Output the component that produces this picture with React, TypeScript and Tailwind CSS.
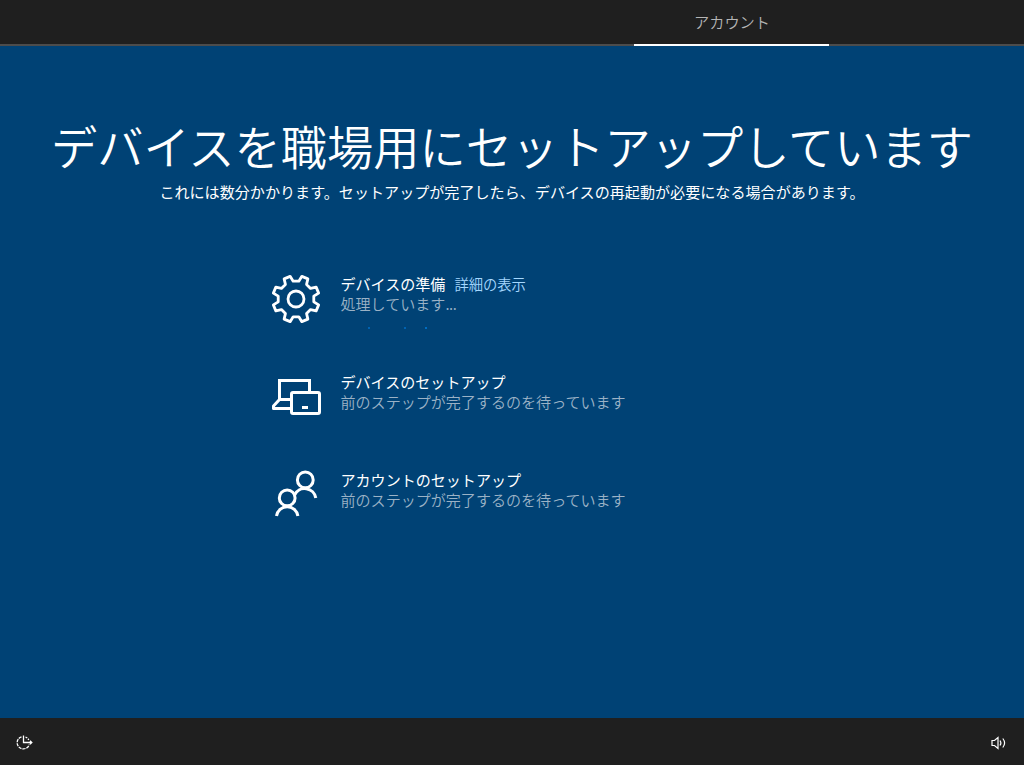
import type { ReactNode } from 'react';

const polar = (radius: number, degrees: number) => {
  const a = ((degrees - 90) * Math.PI) / 180;
  return `${(24 + radius * Math.cos(a)).toFixed(2)},${(24 + radius * Math.sin(a)).toFixed(2)}`;
};

const gearPoints = Array.from({ length: 8 }, (_, i) => {
  const a = i * 45;
  return [polar(18, a - 9), polar(18, a + 9), polar(23.4, a + 14.5), polar(23.4, a + 30.5)].join(' ');
}).join(' ');

function GearIcon() {
  return (
    <svg className="mt-px h-12 w-12 overflow-visible" viewBox="0 0 48 48" fill="none" stroke="white" strokeWidth="2.8">
      <polygon points={gearPoints} strokeLinejoin="round" />
      <circle cx="24" cy="24" r="8" />
    </svg>
  );
}

function DevicesIcon() {
  return (
    <svg className="mt-px h-12 w-12 overflow-visible" viewBox="0 0 48 48" fill="none" stroke="white" strokeWidth="3">
      <path d="M7.500 26V7.500H37.500V19" />
      <path d="M18 26.500H7.500L1.500 33V35.500H18" strokeLinejoin="round" />
      <rect x="19.500" y="19.500" width="28" height="21" rx="1.500" />
      <path d="M30 34.500H36" />
    </svg>
  );
}

function PeopleIcon() {
  return (
    <svg className="mt-px h-12 w-12 overflow-visible" viewBox="0 0 48 48" fill="none" stroke="white" strokeWidth="3">
      <circle cx="33.300" cy="8.900" r="7.900" />
      <path d="M22.600 24A11.200 11.200 0 0 1 43.800 27" />
      <circle cx="15.200" cy="26.900" r="7.900" />
      <path d="M4.500 45A10.800 10.800 0 0 1 25.900 45" />
    </svg>
  );
}

function EaseIcon() {
  return (
    <svg className="mt-0.5 h-4 w-[18px]" viewBox="0 0 18 16" fill="none" stroke="white" strokeWidth="1.3">
      <path d="M5.500 1.800A6.200 6.200 0 1 0 13.300 9.500" strokeDasharray="3.200 0.900" />
      <path d="M9.500 2A6.200 6.200 0 0 1 12.800 5" strokeDasharray="2 1" />
      <path d="M7.500 0.500V7.500H15.500M14 5.800L15.800 7.500L14 9.200" />
    </svg>
  );
}

function VolumeIcon() {
  return (
    <svg className="mt-0.5 h-4 w-4" viewBox="0 0 16 16" fill="none" stroke="white" strokeWidth="1.200">
      <path d="M1 5.500H3.500L7 2.500V13.500L3.500 10.500H1Z" />
      <path d="M9 5.500Q10.800 8 9 10.500" />
      <path d="M11.800 3.500Q15.400 8 11.800 12.500" />
    </svg>
  );
}

function Step({ icon, title, link, status }: { icon: ReactNode; title: string; link?: string; status: string }) {
  return (
    <li className="flex h-[98px] items-start">
      {icon}
      <div className="ml-[20.500px] text-[15.050px] leading-5">
        <div className="flex gap-[9px]">
          <span>{title}</span>
          {link && <a className="text-[14.300px] font-[350] text-[#a6d8ff]" href="#">{link}</a>}
        </div>
        <p className="font-[350] text-[#9bb2c6]">
          {status}
          {link && <span className="tracking-[-0.400px]">...</span>}
        </p>
        {link && (
          <div className="mt-[13px] flex pl-[27.500px]" role="progressbar">
            <i className="h-0.5 w-0.5 bg-[#0062b1]" />
            <i className="ml-[34px] h-0.5 w-0.5 bg-[#0062b1]" />
            <i className="ml-[19px] h-0.5 w-0.5 bg-[#006cc1]" />
          </div>
        )}
      </div>
    </li>
  );
}

export default function App() {
  return (
    <div className="flex h-[765px] w-[1024px] flex-col overflow-hidden bg-[#004275] font-['Noto_Sans_CJK_JP','Liberation_Sans',sans-serif] text-white">
      <header className="flex h-[46px] shrink-0 bg-[#1f1f1f]">
        <div className="w-[634px] border-b-2 border-[#4c4c4c]" />
        <div className="flex w-[195px] justify-center border-b-2 border-white pt-2.5 pl-px text-[15.200px] leading-[22px] font-[350] text-[#b5b5b5]">
          アカウント
        </div>
        <div className="flex-1 border-b-2 border-[#4c4c4c]" />
      </header>
      <main className="flex-1">
        <h1 className="mt-[65px] text-center text-[46.250px] leading-[68px] font-[350] whitespace-nowrap">
          デバイスを職場用にセットアップしています
        </h1>
        <p className="mt-0.5 text-center text-[15.080px] leading-[22px] whitespace-nowrap">
          これには数分かかります。セットアップが完了したら、デバイスの再起動が必要になる場合があります。
        </p>
        <ul className="mt-[71px] ml-[272px]">
          <Step icon={<GearIcon />} title="デバイスの準備" link="詳細の表示" status="処理しています" />
          <Step icon={<DevicesIcon />} title="デバイスのセットアップ" status="前のステップが完了するのを待っています" />
          <Step icon={<PeopleIcon />} title="アカウントのセットアップ" status="前のステップが完了するのを待っています" />
        </ul>
      </main>
      <footer className="flex h-[47px] shrink-0 items-center justify-between bg-[#1f1f1f] pr-[17px] pl-4">
        <EaseIcon />
        <VolumeIcon />
      </footer>
    </div>
  );
}
